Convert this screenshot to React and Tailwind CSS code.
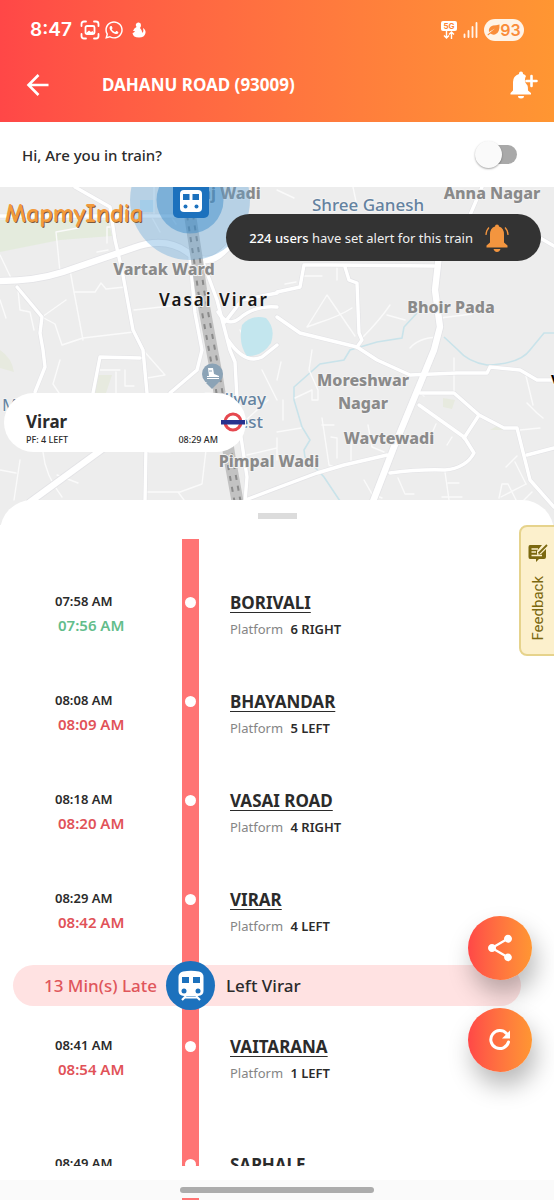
import { useState } from "react";
import { FaWhatsapp } from "react-icons/fa";
import { MdShare } from "react-icons/md";

const stops = [
  { name: "BORIVALI", sched: "07:58 AM", actual: "07:56 AM", platform: "6 RIGHT", early: true },
  { name: "BHAYANDAR", sched: "08:08 AM", actual: "08:09 AM", platform: "5 LEFT" },
  { name: "VASAI ROAD", sched: "08:18 AM", actual: "08:20 AM", platform: "4 RIGHT" },
  { name: "VIRAR", sched: "08:29 AM", actual: "08:42 AM", platform: "4 LEFT", current: true },
  { name: "VAITARANA", sched: "08:41 AM", actual: "08:54 AM", platform: "1 LEFT", next: true },
  { name: "SAPHALE", sched: "08:49 AM", actual: "09:01 AM", platform: "1 LEFT" },
];

const minorRoads = [
  "M0 255 L12 280 M60 272 L56 232 L78 228 M97 252 L108 250 M107 243 V227 H114",
  "M70 270 L74 292 L95 292 L101 283 L106 289 L125 287 M74 292 L83 340",
  "M42 317 L55 324 L62 345 L83 338 L134 332 M42 317 L66 300",
  "M18 290 L20 310 L30 312 L34 330 M0 300 L6 318 M60 360 L53 384 L59 393",
  "M134 310 L198 303 M143 350 L165 375 L147 378 M98 370 H120 M116 372 V394 M125 370 V386 H134",
  "M43 452 Q45 475 62 497 M57 475 L78 483 M20 460 L14 500 M0 470 L16 473",
  "M146 492 L180 492 L202 484 L206 450 M146 452 H170 M178 492 L184 500",
  "M304 276 H322 M337 268 V280 M285 284 L296 282 M307 327 L327 295 L355 336 M307 327 L318 323 M318 323 Q340 316 352 308",
  "M362 338 Q380 320 390 305 M387 315 L405 320 M410 348 Q418 338 438 337 M440 318 L472 314",
  "M277 380 L281 362 M312 350 L309 370 L318 390 V400 H312 V390 L295 398 M277 432 L301 428",
  "M322 418 L329 465 L334 467 M322 425 H334 M331 437 L337 438 V458 M351 460 V438 M368 425 L372 447 L384 452",
  "M454 393 V358 M420 393 L424 396 M436 424 L429 440 M452 437 L447 445",
  "M527 403 L537 413 L543 418 M525 372 L533 405 M520 430 L540 428 M517 456 L506 467 M515 462 L526 484",
  "M398 478 L405 494 H414 M364 480 L372 494 L382 498 M445 472 L449 500 M448 483 H459 M442 497 H462",
  "M526 484 L501 497 M499 498 L502 484 L508 484 L516 500 M532 492 L524 500 M353 187 L357 206 M277 190 L294 198",
  "M240 330 L250 350 M262 370 L277 400 M247 455 L277 448 M246 420 L268 400 M277 460 V438 M283 400 V420",
  "M154 187 V214 M170 215 L176 224 M150 214 L160 232",
];

const roads = [
  "M75 187 L110 207 L115 240 L122 270 L133 330 L143 350 L147 393 L145 502",
  "M0 216 H182",
  "M17 287 L42 317 L40 333 L43 350 L45 367 L35 392",
  "M93 393 L100 357 L140 358",
  "M170 393 L197 370 L202 350 L195 313 L190 258",
  "M203 262 L217 300 L230 350 L235 362 L238 417 L247 477 L245 502",
  "M218 312 Q228 328 240 318 Q255 305 277 307 M228 340 Q245 365 262 357 L277 345 M225 322 L242 300 L277 293",
  "M277 292 L300 287 L304 265 H330 L434 266",
  "M345 267 L349 280 L357 283 L359 333 L362 340 L357 347",
  "M277 317 L300 333 L357 347 L377 360 L410 375 L457 373 L487 373 L490 367 L520 370 L537 380 L554 380",
  "M419 405 L464 437 L474 453 Q466 468 445 470 Q420 469 390 473",
  "M464 438 L479 415 L454 393 L420 393 M479 415 L504 428 L517 428 L530 480 L554 507",
  "M527 455 L554 448 M240 502 L277 488 L317 473 L344 465 L387 455",
  "M470 215 L482 187 M535 235 L554 246",
];

const mainRoads = [
  "M0 281 Q35 281 63 272 L133 248 Q165 236 187 252 Q207 268 223 252 L240 236",
  "M439 255 L435 290 L440 327 L434 350 L394 447 L372 504",
  "M104 448 L30 502",
];

const rails = "M190 215 L197 260 L201 290 L212 350 L217 377 L230 460 L238 504";

const areaLabels = [
  { text: "Vartak Ward", x: 164, y: 275 },
  { text: "aj Wadi", x: 231, y: 199 },
  { text: "Anna Nagar", x: 492, y: 199 },
  { text: "Bhoir Pada", x: 451, y: 313 },
  { text: "Moreshwar", x: 363, y: 386 },
  { text: "Nagar", x: 363, y: 409 },
  { text: "Wavtewadi", x: 389, y: 444 },
  { text: "Pimpal Wadi", x: 269, y: 467 },
];

const placeLabels = [
  { text: "Shree Ganesh", x: 368, y: 211 },
  { text: "Railway", x: 235, y: 405 },
  { text: "West", x: 243, y: 428 },
];

function CityMap() {
  return (
    <svg viewBox="0 187 554 338" preserveAspectRatio="xMidYMin slice" className="block h-full w-full" aria-label="Map of Vasai Virar">
      <rect x="0" y="187" width="554" height="338" fill="#ededed" />
      <path d="M0 220 H108 L112 236 L60 240 L0 252 Z" fill="#e4ebdd" />
      <path d="M97 375 H112 L106 393 H94 Z M0 350 Q12 358 14 372 L0 368 Z M443 398 L455 400 L452 409 L443 407 Z M490 430 L500 424 L504 430 Z" fill="#e7eadf" />
      <path d="M140 200 H155 V212 H140 Z" fill="#cfe6f2" />
      <g fill="none" stroke="#c9e3ea" strokeWidth="1.6">
        <path d="M554 333 H544 L530 350 Q520 364 487 365 Q468 362 458 350 L444 337" />
        <path d="M417 313 L404 327 L402 338 L377 342 L350 350 L344 360 L320 364 L294 387 V400 L302 427 L310 440 L304 450 L305 457 L324 477 L342 504" />
      </g>
      <g fill="none" strokeLinejoin="round" strokeLinecap="round">
        <g stroke="#fafafa" strokeWidth="1.4">
          {minorRoads.map((d) => <path key={d} d={d} />)}
        </g>
        <g stroke="#e3e3e6" strokeWidth="4.6">
          {roads.map((d) => <path key={d} d={d} />)}
        </g>
        <g stroke="#e3e3e6" strokeWidth="8">
          {mainRoads.map((d) => <path key={d} d={d} />)}
        </g>
        <g stroke="#fff" strokeWidth="3.4">
          {roads.map((d) => <path key={d} d={d} />)}
        </g>
        <g stroke="#fff" strokeWidth="6.4">
          {mainRoads.map((d) => <path key={d} d={d} />)}
        </g>
      </g>
      <path d="M242 325 Q252 314 266 318 Q276 328 271 343 Q262 357 247 356 Q238 344 242 325 Z" fill="#c3e6ee" />
      <g fill="none">
        <path d={rails} stroke="#c2c2c2" strokeWidth="12" />
        <path d={rails} stroke="#8a8a8a" strokeWidth="8" strokeDasharray="5 6" />
        <path d={rails} stroke="#c2c2c2" strokeWidth="4" />
      </g>

      <g fontFamily='"Noto Sans", sans-serif' textAnchor="middle" paintOrder="stroke" stroke="#f3f3f3" strokeWidth="2" strokeLinejoin="round">
        {areaLabels.map((l) => (
          <text key={l.text} x={l.x} y={l.y} fontSize="16" fontWeight="800" fill="#8a8a8a">{l.text}</text>
        ))}
        {placeLabels.map((l) => (
          <text key={l.text} x={l.x} y={l.y} fontSize="17" fontWeight="500" fill="#6482a0">{l.text}</text>
        ))}
        <text x="2" y="411" fontSize="17" textAnchor="start" fill="#6482a0">M</text>
        <text x="214" y="306" fontSize="17" fontWeight="600" letterSpacing="2" fill="#161616">Vasai Virar</text>
        <text x="551" y="384" fontSize="13" fontWeight="800" textAnchor="start" fill="#000">V</text>
      </g>

      {/* nearby station */}
      <path d="M212 389 L206 383 H218 Z" fill="#8ba3b6" />
      <circle cx="212.500" cy="374" r="10.500" fill="#8ba3b6" />
      <path d="M208 368 H213 L214 374 L219 376 V379 H207 V376 H209 Z" fill="#fff" />
      <path d="M209 371 H212 M207 377.500 H219" stroke="#8ba3b6" strokeWidth="1" />

      {/* live train position */}
      <circle cx="190" cy="200" r="60" fill="#5aa2d8" fillOpacity=".36" />
      <circle cx="190" cy="200" r="33.500" fill="#2b82c6" fillOpacity=".42" />
      <rect x="173" y="180" width="36" height="38" rx="5" fill="#1c71bd" />
      <rect x="180" y="190" width="22" height="22" rx="4" fill="#fff" />
      <path d="M183 194 H189.500 V200 H183 Z M192.500 194 H199 V200 H192.500 Z" fill="#1c71bd" />
      <circle cx="185.500" cy="206.500" r="2" fill="#1c71bd" />
      <circle cx="196.500" cy="206.500" r="2" fill="#1c71bd" />

      <g fontFamily='"Comic Neue", "Lato", sans-serif' fontSize="26" fontWeight="900">
        <text x="6" y="223" fill="#7d5a3a">MapmyIndia</text>
        <text x="5" y="222" fill="#f29a3c">MapmyIndia</text>
      </g>
    </svg>
  );
}

function BellPlus() {
  return (
    <svg viewBox="0 0 28 28" className="h-7 w-7" fill="#fff">
      <path d="M11 0.500 a2 2 0 0 1 2 2 v0.500 q2 .7 3 2 q-3 5 1.500 9.500 q.5 1 .5 5 l3 2.500 v1.500 H0.500 v-1.500 l2.500 -2.500 V11 q0 -6 6 -8 v-.5 a2 2 0 0 1 2 -2 Z M8 25 h6 a3 2.500 0 0 1 -6 0 Z" />
      <path d="M21.500 5 V15 M16.500 10 H26.500" stroke="#fff" strokeWidth="2.600" strokeLinecap="round" />
    </svg>
  );
}

function RingingBell() {
  return (
    <svg viewBox="0 0 24 28" className="h-7 w-6 shrink-0" fill="#f3953f">
      <path d="M12 0.500 a2 2 0 0 1 2 2 q5 1.500 5 8 v8 l3.500 3 v2 H1.500 v-2 l3.500 -3 v-8 q0 -6.500 5 -8 a2 2 0 0 1 2 -2 Z M8.500 25 h7 q-1 3 -3.500 3 t-3.500 -3 Z" />
      <path d="M4 3.500 Q1 6.500 1 11 M20 3.500 Q23 6.500 23 11" stroke="#f3953f" strokeWidth="1.200" fill="none" />
    </svg>
  );
}

function TrainIcon() {
  return (
    <svg viewBox="0 0 28 32" className="h-8 w-7">
      <path d="M6 1.500 Q14 0 22 1.500 Q26.500 2.500 26.500 7 V21 Q26.500 25.500 21 26 H7 Q1.500 25.500 1.500 21 V7 Q1.500 2.500 6 1.500 Z" fill="#fff" />
      <path d="M5 7 H12 V13 H5 Z M16 7 H23 V13 H16 Z" fill="#1c71bd" />
      <circle cx="7" cy="21" r="2.500" fill="#1c71bd" />
      <circle cx="21" cy="21" r="2.500" fill="#1c71bd" />
      <path d="M9 26 L5 30 M19 26 L23 30 M8 27.500 H20" stroke="#fff" strokeWidth="2.200" />
    </svg>
  );
}

function StatusBar() {
  return (
    <div className="flex h-[22px] items-center pr-[30px] pl-[30px] text-white">
      <span className="font-['Inter'] text-[19px] leading-[22px] font-semibold">8:47</span>
      <svg viewBox="0 0 20 20" className="ml-2 h-5 w-5" fill="none" stroke="#fff" strokeWidth="1.800" strokeLinecap="round">
        <path d="M1.500 6 V4 Q1.500 1.500 4 1.500 H6 M14 1.500 H16 Q18.500 1.500 18.500 4 V6 M18.500 14 V16 Q18.500 18.500 16 18.500 H14 M6 18.500 H4 Q1.500 18.500 1.500 16 V14" />
        <rect x="5.500" y="6" width="9" height="8" rx="1.500" />
        <path d="M6 13 L9 10.500 L11 12 L12.500 11 L14 13 Z" fill="#fff" stroke="none" />
      </svg>
      <FaWhatsapp className="ml-1 h-5 w-5" />
      <svg viewBox="0 0 14 16" className="ml-2 h-4 w-[14px]" fill="#fff">
        <path d="M6 0.500 Q9 0 9 3 Q9 5 8 6 Q10 8 10.500 11 Q12 9 11 6 Q14 8 13.500 11 Q12.500 15.500 7 15.500 Q1 15.500 0.500 11 Q2 11 3 9 L1 9 Q2 6 4.500 5 Q2.500 1.500 6 0.500 Z" />
      </svg>

      <div className="ml-auto flex items-center gap-[6px]">
        <div className="flex w-4 flex-col items-center">
          <span className="rounded-[2px] bg-white px-[2px] font-['Inter'] text-[8px] leading-[10px] font-bold text-[#ff8434]">5G</span>
          <svg viewBox="0 0 12 8" className="h-2 w-3" fill="none" stroke="#fff" strokeWidth="1.400">
            <path d="M3.500 0 V7 M1 4.500 L3.500 7 L6 4.500 M8.500 8 V1 M6 3.500 L8.500 1 L11 3.500" />
          </svg>
        </div>
        <svg viewBox="0 0 15 16" className="h-4 w-[15px]" stroke="#fff" strokeWidth="1.800" strokeLinecap="round">
          <path d="M1.500 12.500 V15 M5.500 9 V15 M9.500 5 V15 M13.500 1 V15" strokeOpacity=".9" />
        </svg>
        <div className="flex h-[22px] w-10 items-center justify-center rounded-full bg-[#fff3e6] text-[#fa8d3a]">
          <svg viewBox="0 0 13 12" className="h-3 w-[13px]" fill="#fa8d3a">
            <path d="M12.500 0.500 Q13 9 8 10.500 Q5 11 3.500 9.500 L1 11.500 L0.500 10.500 L8 4.500 L2 8 Q1 3 6 1.500 Q9 1.500 12.500 0.500 Z" />
          </svg>
          <span className="font-['Inter'] text-[16px] leading-[22px] font-semibold">93</span>
        </div>
      </div>
    </div>
  );
}

function StopRow({ stop }) {
  const { name, sched, actual, platform, early, current, next } = stop;
  return (
    <li className={`grid shrink-0 grid-cols-[182px_17px_1fr] items-start ${current ? "h-[79px]" : next ? "mt-[27px] h-[118px]" : "h-[99px]"}`}>
      <div className="pl-[55px] font-semibold">
        <p className="text-[13px] leading-6 text-[#2b2b2b]">{sched}</p>
        <p className={`pl-[3px] text-[15px] leading-6 ${early ? "text-[#63bd8b]" : "text-[#e15258]"}`}>{actual}</p>
      </div>
      <span className="mt-2 h-[11px] w-[11px] justify-self-center rounded-full bg-white" />
      <div className="pl-[31px]">
        <h2 className="text-[17px] leading-7 font-bold text-[#2b2b2b]">
          <a href="#station" className="underline decoration-1 underline-offset-[3px]">{name}</a>
        </h2>
        <p className="text-[13px] leading-6 text-[#858585]">
          Platform <span className="ml-1 font-semibold text-[#2b2b2b]">{platform}</span>
        </p>
      </div>
    </li>
  );
}

export default function App() {
  const [inTrain, setInTrain] = useState(false);

  return (
    <div className="relative flex h-screen flex-col overflow-hidden bg-white font-['Noto_Sans',sans-serif]">
      <header className="shrink-0 bg-gradient-to-r from-[#ff4747] to-[#ff9632] pt-[19px] pb-4">
        <StatusBar />
        <div className="mt-[23px] flex h-[42px] items-center pr-4 pl-[26px]">
          <button type="button" aria-label="Back">
            <svg viewBox="0 0 24 24" className="h-6 w-6" fill="none" stroke="#fff" strokeWidth="2.600">
              <path d="M22.500 12 H3 M12.500 2 L2.500 12 L12.500 22" />
            </svg>
          </button>
          <h1 className="ml-[52px] text-[17px] leading-6 font-bold text-white">DAHANU ROAD (93009)</h1>
          <button type="button" aria-label="Add alert" className="ml-auto">
            <BellPlus />
          </button>
        </div>
      </header>

      <div className="flex h-[65px] shrink-0 items-center justify-between pr-[37px] pl-[22px]">
        <label htmlFor="in-train" className="text-[15px] leading-6 font-medium text-[#2b2b2b]">Hi, Are you in train?</label>
        <input
          id="in-train"
          type="checkbox"
          checked={inTrain}
          onChange={(e) => setInTrain(e.target.checked)}
          className="relative h-[19px] w-9 appearance-none rounded-full bg-[#a9a9a9] before:absolute before:-top-1 before:-left-[6px] before:h-[27px] before:w-[27px] before:rounded-full before:bg-[#fafafa] before:shadow-[0_1px_2px_rgba(0,0,0,0.35)] checked:before:left-4"
        />
      </div>

      <section className="relative h-[338px] shrink-0 overflow-hidden">
        <CityMap />
        <div className="absolute top-[27px] right-[13px] flex h-[47px] items-center gap-3 rounded-full bg-[#333] pr-[32px] pl-[23px] text-[13px] leading-5 text-[#f0f0f0]">
          <p>
            <strong className="font-medium text-white">224 users</strong> have set alert for this train
          </p>
          <RingingBell />
        </div>

        <div className="absolute top-[206px] left-1 flex h-[59px] w-[242px] flex-col justify-end rounded-full bg-white pr-7 pb-[6px] pl-[22px] text-[#2b2b2b]">
          <p className="text-[17px] leading-6 font-bold">Virar</p>
          <div className="flex justify-between text-[9px] leading-3 font-medium">
            <span>PF: 4 LEFT</span>
            <span>08:29 AM</span>
          </div>
          <svg viewBox="0 0 26 20" className="absolute top-[19px] right-0 h-5 w-[26px]">
            <circle cx="13" cy="10" r="8" fill="#fff" stroke="#e5484f" strokeWidth="3" />
            <rect x="1" y="8" width="24" height="4.500" fill="#27318f" />
          </svg>
        </div>
      </section>

      <main className="relative -mt-[25px] flex min-h-0 flex-1 flex-col rounded-t-[32px] bg-white">
        <div className="mx-auto mt-[13px] h-[6px] w-[39px] shrink-0 bg-[#dcdcdc]" />
        <div className="relative mt-5 min-h-0 flex-1 overflow-hidden">
          <div className="absolute inset-y-0 left-[182px] w-[17px] bg-[#ff7474]" />
          <ul className="relative flex flex-col pt-[50px]">
            {stops.slice(0, 4).map((s) => <StopRow key={s.name} stop={s} />)}
            <li className="mr-[33px] ml-[13px] grid h-[41px] shrink-0 grid-cols-[153px_49px_1fr] items-center rounded-full bg-[#ffe2e2] text-[17px] leading-6 font-medium">
              <span className="pr-[9px] text-right text-[#e0565b]">13 Min(s) Late</span>
              <span className="-my-1 flex h-[49px] w-[49px] items-center justify-center rounded-full bg-[#1c71bd]">
                <TrainIcon />
              </span>
              <span className="pl-[11px] text-[#2b2b2b]">Left Virar</span>
            </li>
            {stops.slice(4).map((s) => <StopRow key={s.name} stop={s} />)}
          </ul>
        </div>
      </main>

      <footer className="mt-[14px] flex h-5 shrink-0 flex-col bg-[#fafafa]">
        <div className="mx-auto mt-[7px] h-[6px] w-[194px] rounded-full bg-[#acacac]" />
        <div className="mt-auto ml-[182px] h-[2px] w-[17px] bg-[#ff7474]" />
      </footer>

      <button
        type="button"
        className="absolute top-[525px] -right-[2px] flex h-[131px] w-[37px] flex-col items-center gap-[13px] rounded-l-lg border-2 border-[#e6d38c] bg-[#fcf0cc] pt-4 text-[#7b680f]"
      >
        <svg viewBox="0 0 20 20" className="h-5 w-5 shrink-0">
          <path d="M2 2 H14 L9 8 V12 L13 11 L18 6 V14 Q18 16 16 16 H11 L8 19 V16 H2 Q0.500 16 0.500 14 V4 Q0.500 2 2 2 Z" fill="#7b680f" />
          <path d="M3.500 6 H10 M3.500 9 H8 M3.500 12.500 H14" stroke="#fcf0cc" strokeWidth="1.300" />
          <path d="M10.500 10.500 L19 2" stroke="#7b680f" strokeWidth="1.800" />
        </svg>
        <span className="rotate-180 font-['Roboto'] text-[15px] leading-5 [writing-mode:vertical-rl]">Feedback</span>
      </button>

      <div className="absolute right-[22px] bottom-[128px] flex flex-col gap-7">
        <button type="button" aria-label="Share" className="flex h-16 w-16 items-center justify-center rounded-full bg-gradient-to-r from-[#ff4747] to-[#ff9632] shadow-[4px_14px_24px_rgba(0,0,0,0.28)]">
          <MdShare className="h-8 w-8 text-white" />
        </button>
        <button type="button" aria-label="Refresh" className="flex h-16 w-16 items-center justify-center rounded-full bg-gradient-to-r from-[#ff4747] to-[#ff9632] shadow-[4px_14px_24px_rgba(0,0,0,0.28)]">
          <svg viewBox="0 0 24 24" className="h-6 w-6" fill="none" stroke="#fff" strokeWidth="3">
            <path d="M18.500 5.500 A9 9 0 1 0 20.500 14" strokeLinecap="round" />
            <path d="M22 2.500 V10.500 H14 Z" fill="#fff" stroke="none" />
          </svg>
        </button>
      </div>
    </div>
  );
}
